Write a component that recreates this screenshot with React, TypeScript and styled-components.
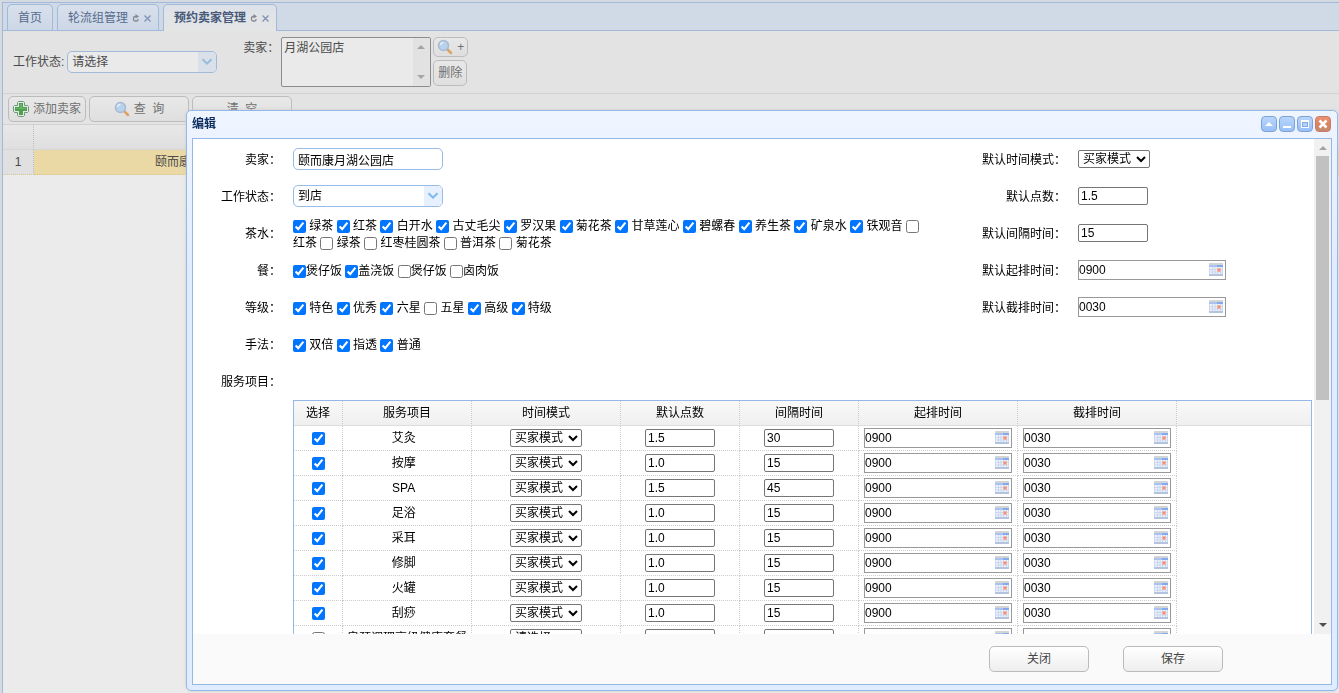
import React, { Fragment, useState } from 'react';
import styled, { createGlobalStyle } from 'styled-components';

const FONT = '"Liberation Sans", "Noto Sans CJK SC", sans-serif';

const GlobalStyle = createGlobalStyle`
  * { box-sizing: border-box; }
  body { margin: 0; overflow: hidden; background: #ebebeb; font: 12px/16px ${FONT}; color: #000; }
  input, select, button { font: 12px/16px ${FONT}; margin: 0; color: inherit; }
`;

/* ---------- page behind the dialog ---------- */

const Page = styled.div`
  display: flex;
  flex-direction: column;
  min-height: 100vh;
  padding: 2px 0 0 2px;
  background: #d5dae1;
  color: #4a4a4a;
`;

const TabStrip = styled.div`
  display: flex;
  gap: 4px;
  height: 29px;
  padding: 1px 4px 0;
  background: #d0d9e6;
  border: solid #a3b9d9;
  border-width: 1px 0 1px 1px;
`;

const Tab = styled.div<{ $active?: boolean }>`
  display: flex;
  align-items: center;
  height: ${p => (p.$active ? 27 : 26)}px;
  padding: 0 6px 0 10px;
  border: 1px solid #a3b9d9;
  border-bottom: 0;
  border-radius: 5px 5px 0 0;
  background: ${p => (p.$active ? 'linear-gradient(#dde2e9, #e5e5e5)' : 'linear-gradient(#d8e0ec, #ccd7e7)')};
  font-weight: ${p => (p.$active ? 'bold' : 'normal')};
  color: ${p => (p.$active ? '#48597a' : '#566a8c')};
`;

const HomeTab = styled(Tab)`
  padding: 0 10px;
`;

const TabTool = styled.button`
  display: flex;
  padding: 0;
  margin-left: 3px;
  border: 0;
  background: none;
`;

const Workspace = styled.main`
  flex: 1;
  border-left: 1px solid #a3b9d9;
  background: #ebebeb;
`;

const Filters = styled.form`
  display: flex;
  height: 63px;
  padding: 6px 0 0 10px;
  background: #e3e3e3;
  border-bottom: 1px solid #d2d2d2;
`;

const StatusFilter = styled.div`
  display: flex;
  align-items: center;
  gap: 3px;
  height: 50px;
  margin-right: 26px;
`;

const SellerLabel = styled.label`
  width: 38px;
  padding-top: 3px;
`;

const ListFrame = styled.div`
  display: flex;
  width: 150px;
  height: 50px;
  border: 1px solid #8c8c8c;
  border-radius: 2px;
  background: #eaeaea;
`;

const ListBox = styled.select`
  flex: 1;
  min-width: 0;
  height: 48px;
  padding: 0;
  border: 0;
  outline: 0;
  background: none;
  overflow: hidden;
`;

const ListArrows = styled.div`
  display: flex;
  flex-direction: column;
  justify-content: space-between;
  width: 17px;
  padding: 7px 4px;
  background: #e2e2e2;
`;

const SideButtons = styled.div`
  display: flex;
  flex-direction: column;
  align-items: flex-start;
  gap: 3px;
  padding-left: 2px;
`;

const PageButton = styled.button<{ $w: number; $h?: number }>`
  display: flex;
  align-items: center;
  justify-content: center;
  gap: 4px;
  width: ${p => p.$w}px;
  height: ${p => p.$h ?? 26}px;
  padding: 0;
  border: 1px solid #bcbcbc;
  border-radius: 5px;
  background: linear-gradient(#e8e8e8, #dfdfdf);
  color: #707070;
  white-space: pre;
`;

const Toolbar = styled.div`
  display: flex;
  gap: 3px;
  height: 31px;
  padding: 2px 5px;
  background: #e3e3e3;
  border-bottom: 1px solid #d2d2d2;
`;

const SellerGrid = styled.table`
  width: 100%;
  table-layout: fixed;
  border-collapse: separate;
  border-spacing: 0;
  text-align: center;

  th, td { height: 25px; padding: 0; font-weight: normal; }
  th { background: linear-gradient(#e8e8e8, #dfdfdf); border-bottom: 1px solid #d5d5d5; }
  th:first-child, td:first-child { border-right: 1px dotted #bdbdbd; }
  td { background: #ead9a5; border-bottom: 1px dotted #d8c68f; }
  td:first-child { background: #e0e0e0; }
`;

/* ---------- shared controls ---------- */

const ComboFrame = styled.span<{ $dim?: boolean }>`
  position: relative;
  display: inline-flex;
  width: 150px;
  height: 22px;
  border: 1px solid ${p => (p.$dim ? '#a3b9d9' : '#99bbe8')};
  border-radius: 5px;
  overflow: hidden;
  background: ${p => (p.$dim ? '#eaeaea' : '#fff')};

  select {
    appearance: none;
    width: 100%;
    padding: 0 4px;
    border: 0;
    outline: 0;
    background: none;
  }
`;

const ComboArrow = styled.span<{ $dim?: boolean }>`
  position: absolute;
  inset: 0 0 0 auto;
  display: flex;
  align-items: center;
  justify-content: center;
  width: 18px;
  pointer-events: none;
  background: ${p => (p.$dim ? '#d9e0ea' : '#e6f0ff')};
`;

function Combo({ id, value, dim }: { id: string; value: string; dim?: boolean }) {
  return (
    <ComboFrame $dim={dim}>
      <select id={id}><option>{value}</option></select>
      <ComboArrow $dim={dim}>
        <svg width="12" height="8" viewBox="0 0 12 8" fill="none" stroke={dim ? '#96bcd9' : '#7db9ea'} strokeWidth="2">
          <path d="M1.5 1.2 6 5.7l4.5-4.5" />
        </svg>
      </ComboArrow>
    </ComboFrame>
  );
}

const RoundInput = styled.input`
  width: 150px;
  height: 22px;
  padding: 0 4px;
  border: 1px solid #99bbe8;
  border-radius: 5px;
`;

const SmallInput = styled.input`
  display: inline-block;
  vertical-align: middle;
  width: 70px;
  height: 18px;
  padding: 0 2px;
  border: 1px solid #767676;
  border-radius: 2px;
`;

const ModeSelect = styled.select`
  vertical-align: middle;
  width: 72px;
  height: 18px;
  padding: 0;
  border: 1px solid #767676;
  border-radius: 2px;
  background: #fff;
`;

const DateFrame = styled.span`
  display: inline-flex;
  align-items: center;
  vertical-align: middle;
  width: 148px;
  height: 20px;
  padding-right: 2px;
  border: 1px solid #999;
  background: #fff;

  input {
    flex: 1;
    min-width: 0;
    height: 18px;
    padding: 0;
    border: 0;
    outline: 0;
    background: none;
  }
`;

function DateField({ id, value, label }: { id?: string; value: string; label?: string }) {
  return (
    <DateFrame>
      <input id={id} aria-label={label} defaultValue={value} />
      <svg width="14" height="14" viewBox="0 0 14 14">
        <rect width="14" height="13" fill="#ccd9ee" />
        <rect x="1" width="12" height="2" fill="#d3d5d3" />
        <rect y="2" width="14" height="2" fill="#a9c2f2" />
        <rect x="8" y="2" width="6" height="2" fill="#86a8ec" />
        <rect x="1" y="4" width="12" height="7" fill="#eef3fc" />
        <path d="M1 6.500h12M1 9h12M3.500 4v7M6 4v7M8.500 4v7M11.500 4v7" stroke="#c9d7ef" />
        <rect x="8" y="5" width="4" height="4" rx="1" fill="#f2b3a4" />
        <rect x="9" y="6" width="2" height="2" fill="#ee9177" />
        <rect y="11" width="14" height="2" fill="#b4c4de" />
      </svg>
    </DateFrame>
  );
}

const Tick = styled.input.attrs({ type: 'checkbox' })`
  width: 13px;
  height: 13px;
  accent-color: #0075ff;
`;

/* ---------- dialog ---------- */

const Dialog = styled.section`
  position: fixed;
  top: 110px;
  right: 1px;
  bottom: 2px;
  left: 186px;
  display: flex;
  flex-direction: column;
  padding: 0 5px 5px;
  border: 1px solid #95b8e7;
  border-radius: 5px;
  background: linear-gradient(#eff5ff, #e0ecff 160px);
  box-shadow: 0 0 3px #ccc;
`;

const TitleBar = styled.header`
  display: flex;
  align-items: center;
  height: 27px;
  gap: 2px;
  padding: 0 1px 1px 0;

  h1 { flex: 1; margin: 0; font: bold 12px/16px ${FONT}; color: #0e2d5f; }
`;

const WindowTool = styled.button<{ $close?: boolean }>`
  display: flex;
  width: 16px;
  height: 16px;
  padding: 0;
  border: 1px solid ${p => (p.$close ? '#c4796a' : '#7ba3d9')};
  border-radius: 4px;
  background: ${p => (p.$close ? 'linear-gradient(#ee9272, #dc8261 50%, #c48c70)' : 'linear-gradient(#b9d6fb, #98c0f7)')};
`;

const DialogBody = styled.div`
  flex: 1;
  min-height: 0;
  display: flex;
  flex-direction: column;
  border: 1px solid #95b8e7;
  background: #fff;
`;

const ScrollArea = styled.div`
  flex: 1;
  min-height: 0;
  display: flex;
`;

const ScrollContent = styled.div`
  flex: 1;
  min-width: 0;
  padding-top: 2px;
  overflow: hidden;
`;

const ScrollBar = styled.div`
  display: flex;
  flex-direction: column;
  align-items: center;
  justify-content: space-between;
  width: 17px;
  padding: 7px 0;
  background: #f1f1f1;
`;

const Track = styled.div`
  flex: 1;
  width: 13px;
  margin: 6px 0;
`;

const Thumb = styled.div`
  height: 53%;
  background: #c1c1c1;
`;

const FormGrid = styled.div`
  display: grid;
  grid-template-columns: 88px 630px 1fr 236px;
  grid-auto-rows: 37px;
  column-gap: 12px;
  align-items: center;
`;

const FieldLabel = styled.label`
  text-align: right;
  white-space: nowrap;
`;

const Field = styled.div`
  display: flex;
  padding-bottom: 1px;
`;

const Choices = styled.div`
  padding-top: 2px;
  line-height: 17px;

  input { vertical-align: -3px; }
`;

const ServiceFrame = styled.div`
  margin: 0 2px 0 100px;
  border: 1px solid #95b8e7;
`;

const ServiceTable = styled.table`
  width: 100%;
  table-layout: fixed;
  border-collapse: separate;
  border-spacing: 0;
  text-align: center;

  th, td { height: 25px; padding: 0; font-weight: normal; line-height: 16px; white-space: nowrap; }
  th { border-right: 1px dotted #ccc; border-bottom: 1px solid #ddd; background: linear-gradient(#f9f9f9, #efefef); background-clip: border-box; }
  td { border-right: 1px dotted #ccc; border-bottom: 1px dotted #ccc; }
  th:last-child, td:last-child { border-right: 0; }
  td:last-child { border-bottom: 0; }
  td input[type='checkbox'] { vertical-align: middle; }
`;

const ServiceName = styled.td`
  && { white-space: pre; }
`;

const Footer = styled.footer`
  display: flex;
  justify-content: flex-end;
  gap: 34px;
  height: 50px;
  padding: 12px 108px 0 0;
  background: #fafafa;
`;

const FooterButton = styled.button`
  width: 100px;
  height: 26px;
  padding: 0;
  border: 1px solid #bbb;
  border-radius: 5px;
  background: linear-gradient(#fff, #eee);
  color: #444;
`;

/* ---------- icons ---------- */

const Magnifier = () => (
  <svg width="16" height="16" viewBox="0 0 16 16">
    <path d="m10.500 10.500 3.500 3.500" stroke="#d9a462" strokeWidth="2.500" strokeLinecap="round" />
    <circle cx="6.500" cy="6.500" r="5" fill="#b7d3ec" stroke="#a9b9d3" strokeWidth="1.500" />
    <path d="M3.500 6a3 3 0 0 1 3-2.500" stroke="#e6eff8" strokeWidth="1.500" fill="none" />
  </svg>
);

const GreenPlus = () => (
  <svg width="16" height="16" viewBox="0 0 16 16">
    <path d="M5.500.5h5l1 1v3h3l1 1v5l-1 1h-3v3l-1 1h-5l-1-1v-3h-3l-1-1v-5l1-1h3v-3z" fill="#e4e8e4" stroke="#71987a" />
    <path d="M6 2h4v4h4v4h-4v4H6v-4H2V6h4z" fill="#50a052" />
    <path d="M7 3h2v4h4v1H3V7h4z" fill="#6ab56a" />
  </svg>
);

const Triangle = ({ up, color }: { up?: boolean; color: string }) => (
  <svg width="8" height="4" viewBox="0 0 8 4"><path d={up ? 'M0 4 4 0l4 4z' : 'M0 0h8L4 4z'} fill={color} /></svg>
);

const TabTools = ({ name }: { name: string }) => (
  <>
    <TabTool aria-label={`刷新${name}`}>
      <svg width="9" height="10" viewBox="0 0 9 10">
        <path d="M5 3.500H4Q2.500 3.500 2.500 5v1.500Q2.500 8 4 8h1.500Q7 8 7 6.500V6" fill="none" stroke="#858a92" strokeWidth="1.300" />
        <path d="M4.500 1 8 3.500 4.500 5.500z" fill="#858a92" />
      </svg>
    </TabTool>
    <TabTool aria-label={`关闭${name}`}>
      <svg width="9" height="10" viewBox="0 0 9 10" stroke="#7f93b3" strokeWidth="1.300"><path d="m1.500 2.500 6 6m0-6-6 6" /></svg>
    </TabTool>
  </>
);

const toolIcons = [
  { name: '折叠', art: <path d="M3 9 7 5l4 4z" fill="#fff" /> },
  { name: '最小化', art: <path d="M3 9h8v2H3z" fill="#fff" /> },
  {
    name: '最大化',
    art: (
      <>
        <path d="M3 3h8v8H3z" fill="#fff" />
        <path d="M4 5h6v5H4z" fill="#7fabe6" />
        <path d="M5 6h4v3H5z" fill="#b5d2fa" />
      </>
    ),
  },
  { name: '关闭窗口', art: <path d="m3.500 3.500 7 7m0-7-7 7" stroke="#fff" strokeWidth="2.500" /> },
];

/* ---------- data ---------- */

type Choice = [string, boolean];

const teas: Choice[] = [
  ['绿茶', true], ['红茶', true], ['白开水', true], ['古丈毛尖', true], ['罗汉果', true], ['菊花茶', true],
  ['甘草莲心', true], ['碧螺春', true], ['养生茶', true], ['矿泉水', true], ['铁观音', true],
  ['红茶', false], ['绿茶', false], ['红枣桂圆茶', false], ['普洱茶', false], ['菊花茶', false],
];
const meals: Choice[] = [['煲仔饭', true], ['盖浇饭', true], ['煲仔饭', false], ['卤肉饭', false]];
const grades: Choice[] = [['特色', true], ['优秀', true], ['六星', true], ['五星', false], ['高级', true], ['特级', true]];
const skills: Choice[] = [['双倍', true], ['指透', true], ['普通', true]];

const services = [
  ['艾灸', '1.5', '30'], ['按摩', '1.0', '15'], ['SPA', '1.5', '45'], ['足浴', '1.0', '15'], ['采耳', '1.0', '15'],
  ['修脚', '1.0', '15'], ['火罐', '1.0', '15'], ['刮痧', '1.0', '15'], ['肩颈调理高级健康套餐', '', ''],
];
const columns: [string, number?][] = [
  ['选择', 49], ['服务项目', 129], ['时间模式', 149], ['默认点数', 119], ['间隔时间', 119], ['起排时间', 159], ['截排时间', 159], [''],
];

function ChoiceList({ label, items, tight }: { label: string; items: Choice[]; tight?: boolean }) {
  const [checked, setChecked] = useState(items.map(i => i[1]));
  return (
    <Choices role="group" aria-label={label}>
      {items.map(([text], i) => (
        <Fragment key={i}>
          <label>
            <Tick checked={checked[i]} onChange={() => setChecked(checked.map((c, n) => (n === i ? !c : c)))} />
            {tight ? '' : ' '}{text}
          </label>{' '}
        </Fragment>
      ))}
    </Choices>
  );
}

export default function App() {
  return (
    <>
      <GlobalStyle />
      <Page>
        <TabStrip>
          <HomeTab>首页</HomeTab>
          <Tab>轮流组管理<TabTools name="轮流组管理" /></Tab>
          <Tab $active>预约卖家管理<TabTools name="预约卖家管理" /></Tab>
        </TabStrip>
        <Workspace>
          <Filters>
            <StatusFilter>
              <label htmlFor="filter-status">工作状态:</label>
              <Combo id="filter-status" value="请选择" dim />
            </StatusFilter>
            <SellerLabel htmlFor="filter-seller">卖家：</SellerLabel>
            <ListFrame>
              <ListBox id="filter-seller" multiple><option>月湖公园店</option></ListBox>
              <ListArrows><Triangle up color="#a5a5a5" /><Triangle color="#a5a5a5" /></ListArrows>
            </ListFrame>
            <SideButtons>
              <PageButton type="button" $w={35} $h={20}><Magnifier />+</PageButton>
              <PageButton type="button" $w={34}>删除</PageButton>
            </SideButtons>
          </Filters>
          <Toolbar>
            <PageButton $w={78}><GreenPlus />添加卖家</PageButton>
            <PageButton $w={100}><Magnifier />{'查  询'}</PageButton>
            <PageButton $w={100}>{'清  空'}</PageButton>
          </Toolbar>
          <SellerGrid>
            <colgroup><col width="31" /><col width="338" /><col /></colgroup>
            <thead><tr><th /><th /><th /></tr></thead>
            <tbody><tr><td>1</td><td>颐而康月湖公园店</td><td /></tr></tbody>
          </SellerGrid>
        </Workspace>
      </Page>

      <Dialog role="dialog" aria-labelledby="dialog-title">
        <TitleBar>
          <h1 id="dialog-title">编辑</h1>
          {toolIcons.map((t, i) => (
            <WindowTool key={t.name} aria-label={t.name} $close={i === 3}>
              <svg width="14" height="14" viewBox="0 0 14 14">{t.art}</svg>
            </WindowTool>
          ))}
        </TitleBar>
        <DialogBody>
          <ScrollArea>
            <ScrollContent>
              <FormGrid>
                <FieldLabel htmlFor="seller">卖家：</FieldLabel>
                <Field><RoundInput id="seller" defaultValue="颐而康月湖公园店" /></Field>
                <FieldLabel htmlFor="mode">默认时间模式：</FieldLabel>
                <Field><ModeSelect id="mode"><option>买家模式</option></ModeSelect></Field>

                <FieldLabel htmlFor="status">工作状态：</FieldLabel>
                <Field><Combo id="status" value="到店" /></Field>
                <FieldLabel htmlFor="points">默认点数：</FieldLabel>
                <Field><SmallInput id="points" defaultValue="1.5" /></Field>

                <FieldLabel as="span">茶水：</FieldLabel>
                <ChoiceList label="茶水" items={teas} />
                <FieldLabel htmlFor="gap">默认间隔时间：</FieldLabel>
                <Field><SmallInput id="gap" defaultValue="15" /></Field>

                <FieldLabel as="span">餐：</FieldLabel>
                <ChoiceList label="餐" items={meals} tight />
                <FieldLabel htmlFor="start">默认起排时间：</FieldLabel>
                <Field><DateField id="start" value="0900" /></Field>

                <FieldLabel as="span">等级：</FieldLabel>
                <ChoiceList label="等级" items={grades} />
                <FieldLabel htmlFor="end">默认截排时间：</FieldLabel>
                <Field><DateField id="end" value="0030" /></Field>

                <FieldLabel as="span">手法：</FieldLabel>
                <ChoiceList label="手法" items={skills} />
                <span />
                <span />

                <FieldLabel as="span">服务项目：</FieldLabel>
              </FormGrid>
              <ServiceFrame>
                <ServiceTable>
                  <colgroup>{columns.map(([name, w]) => <col key={name} width={w} />)}</colgroup>
                  <thead><tr>{columns.map(([name]) => <th key={name}>{name}</th>)}</tr></thead>
                  <tbody>
                    {services.map(([name, points, gap]) => (
                      <tr key={name}>
                        <td><Tick aria-label={name} defaultChecked={points !== ''} /></td>
                        <ServiceName>{name}{points && '\u00a0\u00a0'}</ServiceName>
                        <td><ModeSelect aria-label={`${name}时间模式`}><option>{points ? '买家模式' : '请选择'}</option></ModeSelect></td>
                        <td><SmallInput aria-label={`${name}默认点数`} defaultValue={points} /></td>
                        <td><SmallInput aria-label={`${name}间隔时间`} defaultValue={gap} /></td>
                        <td><DateField label={`${name}起排时间`} value={points && '0900'} /></td>
                        <td><DateField label={`${name}截排时间`} value={points && '0030'} /></td>
                        <td />
                      </tr>
                    ))}
                  </tbody>
                </ServiceTable>
              </ServiceFrame>
            </ScrollContent>
            <ScrollBar>
              <Triangle up color="#a3a3a3" />
              <Track><Thumb /></Track>
              <Triangle color="#505050" />
            </ScrollBar>
          </ScrollArea>
          <Footer>
            <FooterButton>关闭</FooterButton>
            <FooterButton>保存</FooterButton>
          </Footer>
        </DialogBody>
      </Dialog>
    </>
  );
}
